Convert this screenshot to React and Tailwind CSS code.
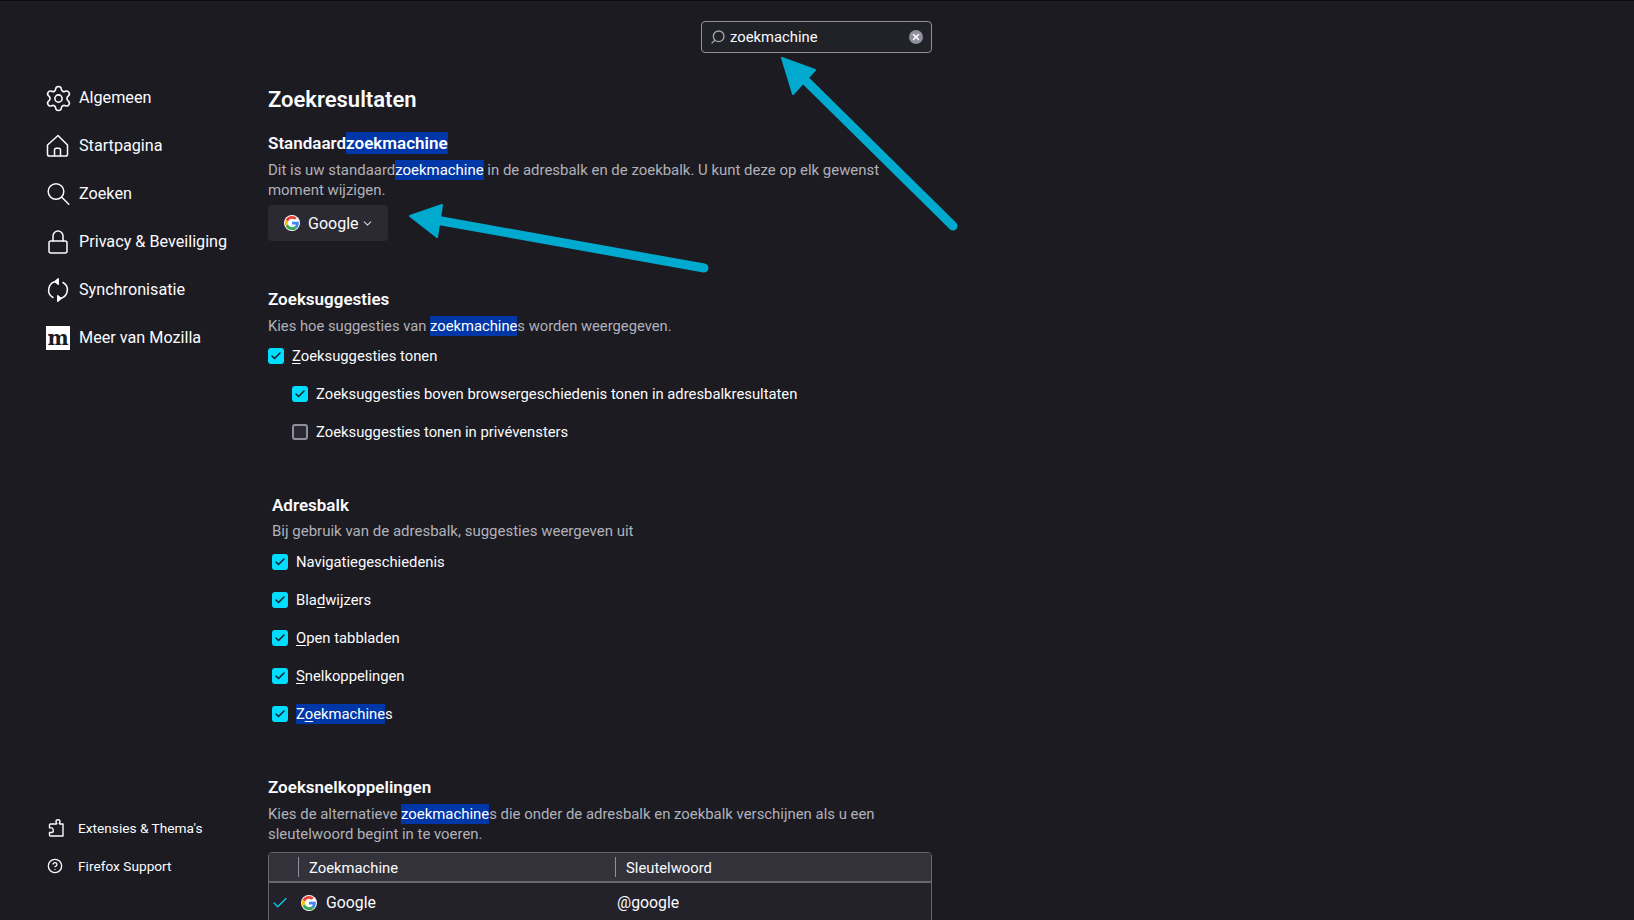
import React from 'react';
import { Search, X, ChevronDown, Check, CircleHelp, Settings } from 'lucide-react';

const Hl = ({ children }) => <span className="bg-[#0037a8] py-px text-white">{children}</span>;
const Key = ({ children }) => <span className="underline underline-offset-2">{children}</span>;

const GoogleIcon = ({ size = 16 }) => (
  <svg width={size} height={size} viewBox="-3 -3 54 54" className="shrink-0 rounded-full bg-white">
    <path fill="#EA4335" d="M24 9.5c3.5 0 6.7 1.2 9.2 3.6l6.9-6.9C35.9 2.4 30.5 0 24 0 14.6 0 6.5 5.4 2.6 13.2l8 6.2C12.5 13.7 17.8 9.5 24 9.5z" />
    <path fill="#4285F4" d="M46.9 24.5c0-1.6-.1-3.1-.4-4.5H24v9h12.9c-.6 3-2.2 5.5-4.7 7.2l7.7 6c4.5-4.2 7-10.3 7-17.7z" />
    <path fill="#FBBC05" d="M10.5 28.6c-.5-1.4-.8-3-.8-4.6s.3-3.2.8-4.6l-8-6.2C.9 16.5 0 20.1 0 24s.9 7.5 2.6 10.8l7.9-6.2z" />
    <path fill="#34A853" d="M24 48c6.5 0 11.9-2.1 15.9-5.8l-7.7-6c-2.2 1.4-4.9 2.3-8.2 2.3-6.2 0-11.5-4.2-13.4-9.9l-8 6.2C6.5 42.6 14.6 48 24 48z" />
  </svg>
);

const iconProps = {
  width: 24,
  height: 24,
  viewBox: '0 0 24 24',
  fill: 'none',
  stroke: 'currentColor',
  strokeWidth: 1.5,
  strokeLinejoin: 'round',
  strokeLinecap: 'round',
};

const HomeIcon = () => (
  <svg {...iconProps}>
    <path d="M12 1.5 1.500 11v9.200c0 1 .8 1.800 1.800 1.800h16.400c1 0 1.800-.8 1.800-1.800V11z" />
    <path d="M8.500 22v-6c0-1 .8-1.800 1.800-1.800h2.400c1 0 1.800.8 1.800 1.800v6" />
  </svg>
);

const SearchIcon = () => (
  <svg {...iconProps}>
    <circle cx="10" cy="9.500" r="7.800" />
    <path d="m15.800 15.300 7 7" />
  </svg>
);

const LockIcon = () => (
  <svg {...iconProps}>
    <rect x="3" y="11" width="18" height="12" rx="2" />
    <path d="M7 11V6a5 5 0 0 1 10 0v5" />
  </svg>
);

const SyncIcon = () => (
  <svg {...iconProps}>
    <path d="M7 19.500a8.500 8.500 0 0 1 4-15.900" />
    <path d="M17 4.500a8.500 8.500 0 0 1-4 15.900" />
    <path d="M12.200 .8v5.400L9 3.500zM11.800 23.200v-5.400l3.200 2.700z" fill="currentColor" />
  </svg>
);

const MozillaIcon = () => (
  <div className="flex h-6 w-6 items-center justify-center bg-white">
    <span className="font-['DejaVu_Serif',serif] text-[20px] leading-[20px] font-bold text-[#1c1b22]">m</span>
  </div>
);

// Firefox's own puzzle outline, lucide's differs too much
const PuzzleIcon = () => (
  <svg width="16" height="18" viewBox="0 0 16 18" fill="none" stroke="currentColor" strokeWidth="1.400" strokeLinejoin="round" className="ml-[2px]">
    <path d="M6 5h2.200c.5 0 .7-.4.4-.8-.5-.6-.6-1.200-.6-1.500C8 1.600 9 .8 10 .8s2 .8 2 1.900c0 .3-.1.9-.6 1.500-.3.4-.1.8.4.8H15v12H2.500c-.6 0-1-.4-1-1v-2.500h2c1 0 1.800-.8 1.800-1.800S4.500 8.900 3.500 8.900h-2V6c0-.6.4-1 1-1z" />
  </svg>
);

const navItems = [
  { label: 'Algemeen', icon: <Settings size={29} strokeWidth={1.3} className="shrink-0" /> },
  { label: 'Startpagina', icon: <HomeIcon /> },
  { label: 'Zoeken', icon: <SearchIcon /> },
  { label: 'Privacy & Beveiliging', icon: <LockIcon /> },
  { label: 'Synchronisatie', icon: <SyncIcon /> },
  { label: 'Meer van Mozilla', icon: <MozillaIcon /> },
];

const CheckRow = ({ checked = true, children }) => (
  <div className="flex h-[38px] items-center gap-2">
    {checked ? (
      <span className="flex h-4 w-4 shrink-0 items-center justify-center rounded-[3px] bg-[#00ddff]">
        <Check size={12} strokeWidth={3} className="text-[#1c1b22]" />
      </span>
    ) : (
      <span className="h-4 w-4 shrink-0 rounded-[3px] border-2 border-[#8f8f9d] bg-[#2b2a33]" />
    )}
    <span>{children}</span>
  </div>
);

// annotation arrows that were drawn over the screenshot
const Arrows = () => (
  <svg className="pointer-events-none absolute inset-0" width="1634" height="920" viewBox="0 0 1634 920">
    <path d="M953 225 802 76" stroke="#00a9ce" strokeWidth="9" strokeLinecap="round" fill="none" />
    <path d="M782 57l33 12-22 24z" fill="#00a9ce" stroke="#00a9ce" strokeWidth="2" strokeLinejoin="round" />
    <path d="M704 267 436 219" stroke="#00a9ce" strokeWidth="9" strokeLinecap="round" fill="none" />
    <path d="M410 215l32-11-5 32z" fill="#00a9ce" stroke="#00a9ce" strokeWidth="2" strokeLinejoin="round" />
  </svg>
);

export default function App() {
  return (
    <div className="relative flex h-[920px] overflow-hidden border-t border-[#0c0c0d] bg-[#1c1b22] font-['Roboto',sans-serif] text-[14.8px] text-[#fbfbfe]">
      {/* Sidebar */}
      <aside className="flex w-[268px] shrink-0 flex-col justify-between pb-[44px] pt-[73px] pl-[46px]">
        <nav>
          {navItems.map((item) => (
            <div key={item.label} className="flex h-12 items-center gap-[9px]">
              <span className="flex h-6 w-6 items-center justify-center">{item.icon}</span>
              <span className="text-[16.2px]">{item.label}</span>
            </div>
          ))}
        </nav>
        <div className="flex flex-col gap-[18px] text-[13.7px]">
          <div className="flex h-5 items-center gap-[14px]">
            <PuzzleIcon />
            <span>Extensies &amp; Thema's</span>
          </div>
          <div className="flex h-5 items-center gap-[15px]">
            <CircleHelp size={16} className="ml-px" />
            <span>Firefox Support</span>
          </div>
        </div>
      </aside>

      {/* Main */}
      <main className="w-[664px] shrink-0">
        <div className="flex justify-end pt-5">
          <div className="flex h-8 w-[231px] items-center rounded border border-[#8f8f9d] bg-[#2b2a33]/40 pl-2 pr-2">
            <Search size={16} className="mr-[4px] -scale-x-100 text-[#a5a5ad]" />
            <span className="flex-1 pt-px">zoekmachine</span>
            <span className="flex h-[14px] w-[14px] items-center justify-center rounded-full bg-[#8f8f9d]">
              <X size={10} strokeWidth={3.500} className="text-white" />
            </span>
          </div>
        </div>

        <h1 className="mt-[31px] text-[22px] leading-[32px] font-semibold">Zoekresultaten</h1>

        <section className="mt-[16px]">
          <h2 className="text-[17px] leading-[22px] font-semibold">Standaard<Hl>zoekmachine</Hl></h2>
          <p className="mt-[6px] text-[14.95px] leading-5 text-[#b1b1b9]">
            Dit is uw standaard<Hl>zoekmachine</Hl> in de adresbalk en de zoekbalk. U kunt deze op elk gewenst moment wijzigen.
          </p>
          <div className="mt-[5px] flex h-9 w-[120px] items-center rounded bg-[#2b2a33] pl-4 text-[16px]">
            <GoogleIcon />
            <span className="ml-[8px] pt-[2px]">Google</span>
            <ChevronDown size={13} className="ml-[2px] text-[#d0d0d6]" />
          </div>
        </section>

        <section className="mt-[47px]">
          <h2 className="text-[17px] leading-[22px] font-semibold">Zoeksuggesties</h2>
          <p className="mt-[6px] text-[14.75px] leading-5 text-[#b1b1b9]">
            Kies hoe suggesties van <Hl>zoekmachine</Hl>s worden weergegeven.
          </p>
          <div className="mt-[1px]">
            <CheckRow><Key>Z</Key>oeksuggesties tonen</CheckRow>
            <div className="pl-6">
              <CheckRow>Zoeksuggesties boven browsergeschiedenis tonen in adresbalkresultaten</CheckRow>
              <CheckRow checked={false}>Zoeksuggesties tonen in privévensters</CheckRow>
            </div>
          </div>
        </section>

        <section className="mt-[43px] pl-1">
          <h2 className="text-[17px] leading-[22px] font-semibold">Adresbalk</h2>
          <p className="mt-[5px] text-[15px] leading-5 text-[#b1b1b9]">Bij gebruik van de adresbalk, suggesties weergeven uit</p>
          <div className="mt-[2px]">
            <CheckRow>Navigatiegeschiedenis</CheckRow>
            <CheckRow>Bla<Key>d</Key>wijzers</CheckRow>
            <CheckRow><Key>O</Key>pen tabbladen</CheckRow>
            <CheckRow><Key>S</Key>nelkoppelingen</CheckRow>
            <CheckRow><Hl>Z<Key>o</Key>ekmachine</Hl>s</CheckRow>
          </div>
        </section>

        <section className="mt-[43px]">
          <h2 className="text-[17px] leading-[22px] font-semibold">Zoeksnelkoppelingen</h2>
          <p className="mt-[6px] text-[14.9px] leading-5 text-[#b1b1b9]">
            Kies de alternatieve <Hl>zoekmachine</Hl>s die onder de adresbalk en zoekbalk verschijnen als u een sleutelwoord begint in te voeren.
          </p>
          <div className="mt-[8px] rounded-t border border-[#67676f] bg-[#23222b] pb-10">
            <div className="flex h-[30px] items-center border-b-2 border-[#67676f] bg-[#33323b]">
              <div className="h-5 w-[30px] shrink-0 border-r border-[#8f8f9d]" />
              <div className="h-5 w-[317px] shrink-0 border-r border-[#8f8f9d] pl-[10px] leading-[22px]">Zoekmachine</div>
              <div className="pl-[10px] pt-[2px]">Sleutelwoord</div>
            </div>
            <div className="flex h-10 items-center">
              <div className="flex w-[22px] shrink-0 justify-center">
                <Check size={18} strokeWidth={1.500} className="text-[#00ddff]" />
              </div>
              <div className="flex w-[325px] shrink-0 items-center gap-[9px] pl-[10px] text-[15.8px]">
                <GoogleIcon />
                <span>Google</span>
              </div>
              <div className="pl-px text-[15.8px]">@google</div>
            </div>
          </div>
        </section>
      </main>

      <Arrows />
    </div>
  );
}
